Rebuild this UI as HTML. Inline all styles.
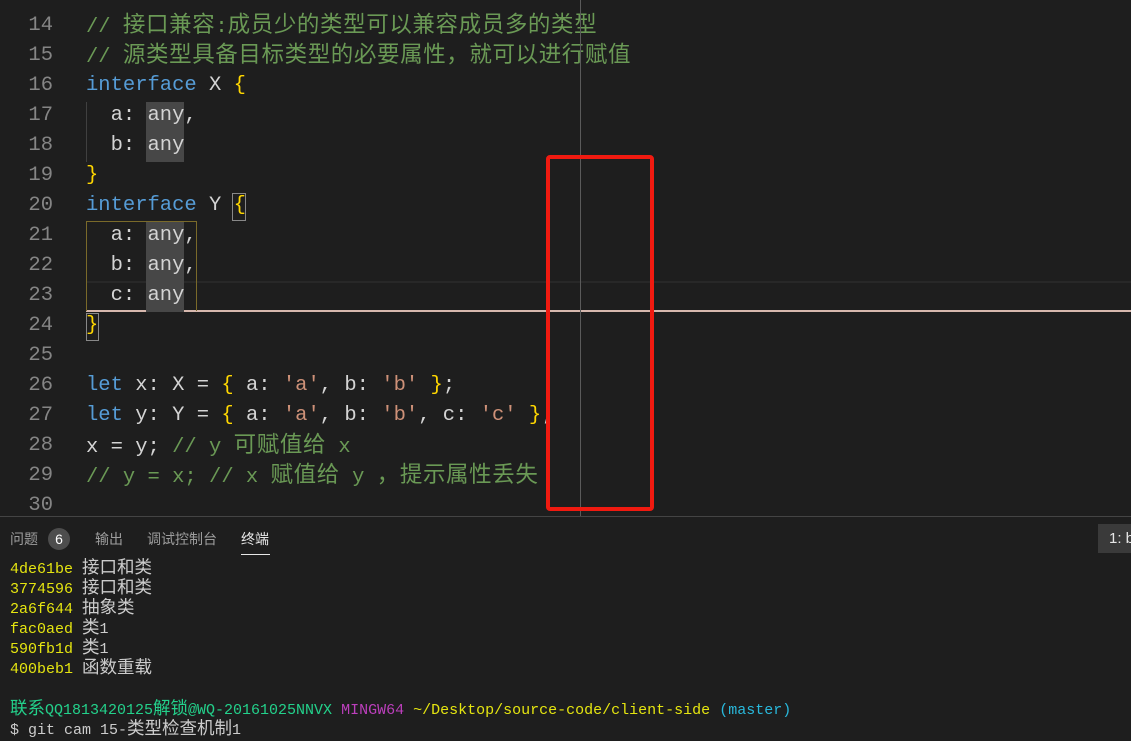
<!DOCTYPE html>
<html><head><meta charset="utf-8"><style>
*{margin:0;padding:0;box-sizing:border-box}
body{width:1131px;height:733px;overflow:hidden;background:#1e1e1e;position:relative;font-family:"Liberation Mono","Noto Sans CJK SC",monospace}
.ln{position:absolute;left:0;width:53px;text-align:right;color:#858585;font-size:20.5px;line-height:30px;height:30px}
.cd{position:absolute;left:86px;color:#d4d4d4;font-size:20.5px;line-height:30px;height:30px;white-space:pre}
.cd i{font-style:normal;font-size:22.5px;letter-spacing:0.6px;line-height:30px}
.k{color:#569cd6}.c{color:#6a9955}.b{color:#ffd700}.s{color:#ce9178}
.t{position:absolute;left:10px;font-size:15px;line-height:20px;white-space:pre;color:#cccccc}
.t i{font-style:normal;font-size:17.5px;line-height:20px}
.y{color:#e5e510}
</style></head><body>
<div style="position:absolute;left:86px;top:281px;width:1045px;height:30px;border-top:2px solid #282828"></div>
<div style="position:absolute;left:86px;top:310px;width:1045px;height:2px;background:#d7b8ae"></div>
<div style="position:absolute;left:86px;top:221px;width:111px;height:90px;border:1px solid #7a6a2a;border-bottom:none"></div>
<div style="position:absolute;left:86px;top:102px;width:1px;height:60px;background:#404040"></div>
<div style="position:absolute;left:146px;top:102px;width:38px;height:60px;background:#474747"></div>
<div style="position:absolute;left:146px;top:222px;width:38px;height:90px;background:#474747"></div>
<div style="position:absolute;left:232px;top:193px;width:14px;height:28px;border:1px solid #888"></div>
<div style="position:absolute;left:86px;top:313px;width:13px;height:28px;border:1px solid #888"></div>

<div class="ln" style="top:-19px">13</div>
<div class="ln" style="top:11px">14</div><div class="cd c" style="top:11px">// <i>接口兼容</i>:<i>成员少的类型可以兼容成员多的类型</i></div>
<div class="ln" style="top:41px">15</div><div class="cd c" style="top:41px">// <i>源类型具备目标类型的必要属性，就可以进行赋值</i></div>
<div class="ln" style="top:71px">16</div><div class="cd" style="top:71px"><span class="k">interface</span> X <span class="b">{</span></div>
<div class="ln" style="top:101px">17</div><div class="cd" style="top:101px">  a: any,</div>
<div class="ln" style="top:131px">18</div><div class="cd" style="top:131px">  b: any</div>
<div class="ln" style="top:161px">19</div><div class="cd" style="top:161px"><span class="b">}</span></div>
<div class="ln" style="top:191px">20</div><div class="cd" style="top:191px"><span class="k">interface</span> Y <span class="b">{</span></div>
<div class="ln" style="top:221px">21</div><div class="cd" style="top:221px">  a: any,</div>
<div class="ln" style="top:251px">22</div><div class="cd" style="top:251px">  b: any,</div>
<div class="ln" style="top:281px">23</div><div class="cd" style="top:281px">  c: any</div>
<div class="ln" style="top:311px">24</div><div class="cd" style="top:311px"><span class="b">}</span></div>
<div class="ln" style="top:341px">25</div>
<div class="ln" style="top:371px">26</div><div class="cd" style="top:371px"><span class="k">let</span> x: X = <span class="b">{</span> a: <span class="s">'a'</span>, b: <span class="s">'b'</span> <span class="b">}</span>;</div>
<div class="ln" style="top:401px">27</div><div class="cd" style="top:401px"><span class="k">let</span> y: Y = <span class="b">{</span> a: <span class="s">'a'</span>, b: <span class="s">'b'</span>, c: <span class="s">'c'</span> <span class="b">}</span>;</div>
<div class="ln" style="top:431px">28</div><div class="cd" style="top:431px">x = y; <span class="c">// y <i>可赋值给</i> x</span></div>
<div class="ln" style="top:461px">29</div><div class="cd c" style="top:461px">// y = x; // x <i>赋值给</i> y <i>，提示属性丢失</i></div>
<div class="ln" style="top:491px">30</div>

<div style="position:absolute;left:580px;top:0;width:1px;height:516px;background:#5a5a5a"></div>
<div style="position:absolute;left:546px;top:155px;width:108px;height:356px;border:4px solid #f01a10;border-radius:4px"></div>

<div style="position:absolute;left:0;top:516px;width:1131px;height:217px;background:#1e1e1e;border-top:1px solid #444"></div>
<div style="position:absolute;top:529px;left:10px;font-family:'Liberation Sans','Noto Sans CJK SC',sans-serif;font-size:14px;line-height:20px;color:#9d9d9d;white-space:nowrap">
<span style="position:absolute;left:0">问题</span>
<span style="position:absolute;left:38px;top:-1px;width:22px;height:22px;border-radius:11px;background:#4d4d4d;color:#fff;text-align:center;line-height:22px">6</span>
<span style="position:absolute;left:85px">输出</span>
<span style="position:absolute;left:137px">调试控制台</span>
<span style="position:absolute;left:231px;color:#e7e7e7">终端</span>
<span style="position:absolute;left:231px;top:25px;width:29px;height:1px;background:#e7e7e7"></span>
</div>
<div style="position:absolute;left:1098px;top:524px;width:40px;height:29px;background:#3a3a3a;color:#e7e7e7;font-family:'Liberation Sans',sans-serif;font-size:15px;line-height:29px;padding-left:11px">1: b</div>

<div class="t" style="top:559px"><span class="y">4de61be</span> <i>接口和类</i></div>
<div class="t" style="top:579px"><span class="y">3774596</span> <i>接口和类</i></div>
<div class="t" style="top:599px"><span class="y">2a6f644</span> <i>抽象类</i></div>
<div class="t" style="top:619px"><span class="y">fac0aed</span> <i>类</i>1</div>
<div class="t" style="top:639px"><span class="y">590fb1d</span> <i>类</i>1</div>
<div class="t" style="top:659px"><span class="y">400beb1</span> <i>函数重载</i></div>
<div class="t" style="top:700px"><span style="color:#23d18b"><i>联系</i>QQ1813420125<i>解锁</i>@WQ-20161025NNVX</span> <span style="color:#bc3fbc">MINGW64</span> <span class="y">~/Desktop/source-code/client-side</span> <span style="color:#29b8db">(master)</span></div>
<div class="t" style="top:720px">$ git cam 15-<i>类型检查机制</i>1</div>
</body></html>
